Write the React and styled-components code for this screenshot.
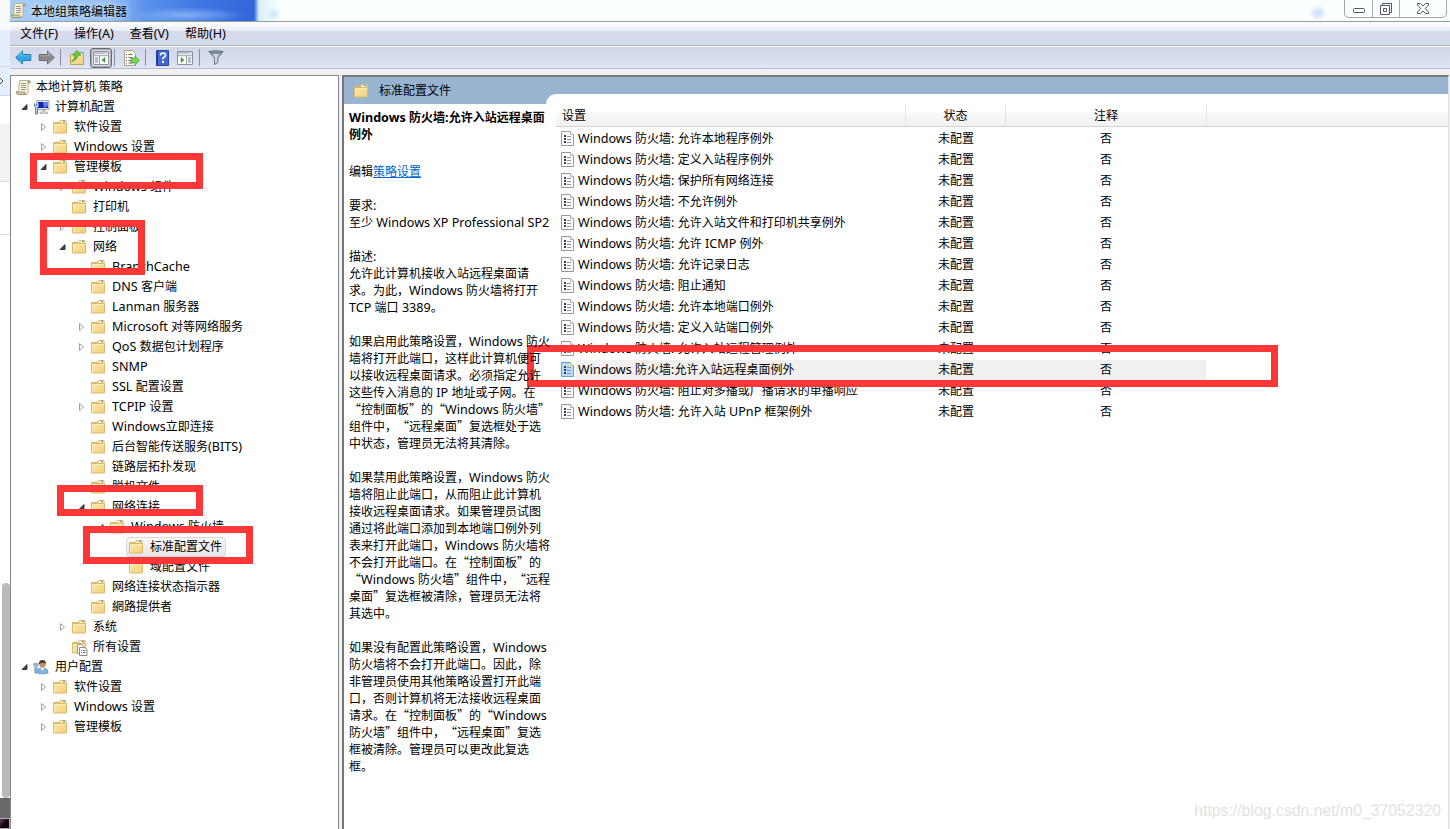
import React from "react";
import styled, { createGlobalStyle } from "styled-components";

const GlobalStyle = createGlobalStyle`
  * {
    box-sizing: border-box;
  }
  body {
    margin: 0;
    overflow: hidden;
    background: #fff;
  }
`;

const tree = [
  { depth: 0, icon: "scroll", label: "本地计算机 策略" },
  { depth: 1, icon: "computer", label: "计算机配置", state: "open" },
  { depth: 2, label: "软件设置", state: "closed" },
  { depth: 2, label: "Windows 设置", state: "closed" },
  { depth: 2, label: "管理模板", state: "open" },
  { depth: 3, label: "Windows 组件", state: "closed" },
  { depth: 3, label: "打印机" },
  { depth: 3, label: "控制面板", state: "closed" },
  { depth: 3, label: "网络", state: "open" },
  { depth: 4, label: "BranchCache" },
  { depth: 4, label: "DNS 客户端" },
  { depth: 4, label: "Lanman 服务器" },
  { depth: 4, label: "Microsoft 对等网络服务", state: "closed" },
  { depth: 4, label: "QoS 数据包计划程序", state: "closed" },
  { depth: 4, label: "SNMP" },
  { depth: 4, label: "SSL 配置设置" },
  { depth: 4, label: "TCPIP 设置", state: "closed" },
  { depth: 4, label: "Windows立即连接" },
  { depth: 4, label: "后台智能传送服务(BITS)" },
  { depth: 4, label: "链路层拓扑发现" },
  { depth: 4, label: "脱机文件" },
  { depth: 4, label: "网络连接", state: "open" },
  { depth: 5, label: "Windows 防火墙", state: "open" },
  { depth: 6, label: "标准配置文件", selected: true },
  { depth: 6, label: "域配置文件" },
  { depth: 4, label: "网络连接状态指示器" },
  { depth: 4, label: "網路提供者" },
  { depth: 3, label: "系统", state: "closed" },
  { depth: 3, icon: "all", label: "所有设置" },
  { depth: 1, icon: "user", label: "用户配置", state: "open" },
  { depth: 2, label: "软件设置", state: "closed" },
  { depth: 2, label: "Windows 设置", state: "closed" },
  { depth: 2, label: "管理模板", state: "closed" },
];

const settings = [
  "Windows 防火墙: 允许本地程序例外",
  "Windows 防火墙: 定义入站程序例外",
  "Windows 防火墙: 保护所有网络连接",
  "Windows 防火墙: 不允许例外",
  "Windows 防火墙: 允许入站文件和打印机共享例外",
  "Windows 防火墙: 允许 ICMP 例外",
  "Windows 防火墙: 允许记录日志",
  "Windows 防火墙: 阻止通知",
  "Windows 防火墙: 允许本地端口例外",
  "Windows 防火墙: 定义入站端口例外",
  "Windows 防火墙: 允许入站远程管理例外",
  "Windows 防火墙:允许入站远程桌面例外",
  "Windows 防火墙: 阻止对多播或广播请求的单播响应",
  "Windows 防火墙: 允许入站 UPnP 框架例外",
];

const description = [
  ["要求:", "至少 Windows XP Professional SP2"],
  [
    "描述:",
    "允许此计算机接收入站远程桌面请",
    "求。为此，Windows 防火墙将打开",
    "TCP 端口 3389。",
  ],
  [
    "如果启用此策略设置，Windows 防火",
    "墙将打开此端口，这样此计算机便可",
    "以接收远程桌面请求。必须指定允许",
    "这些传入消息的 IP 地址或子网。在",
    "“控制面板”的“Windows 防火墙”",
    "组件中，“远程桌面”复选框处于选",
    "中状态，管理员无法将其清除。",
  ],
  [
    "如果禁用此策略设置，Windows 防火",
    "墙将阻止此端口，从而阻止此计算机",
    "接收远程桌面请求。如果管理员试图",
    "通过将此端口添加到本地端口例外列",
    "表来打开此端口，Windows 防火墙将",
    "不会打开此端口。在“控制面板”的",
    "“Windows 防火墙”组件中，“远程",
    "桌面”复选框被清除，管理员无法将",
    "其选中。",
  ],
  [
    "如果没有配置此策略设置，Windows",
    "防火墙将不会打开此端口。因此，除",
    "非管理员使用其他策略设置打开此端",
    "口，否则计算机将无法接收远程桌面",
    "请求。在“控制面板”的“Windows",
    "防火墙”组件中，“远程桌面”复选",
    "框被清除。管理员可以更改此复选",
    "框。",
  ],
];

const marks = [
  { x: 30, y: 153, w: 173, h: 36 },
  { x: 40, y: 220, w: 105, h: 55 },
  { x: 57, y: 485, w: 146, h: 31 },
  { x: 83, y: 526, w: 170, h: 38 },
  { x: 527, y: 345, w: 751, h: 42 },
];

// latin runs get their own face so the CJK punctuation stays full width
const Text = ({ children }) =>
  children
    .split(/( ?[\x21-\x7e]+(?: [\x21-\x7e]+)* ?)/)
    .map((part, i) => (i % 2 ? <Latin key={i}>{part}</Latin> : part));

const FolderShape = () => (
  <>
    <path d="M1.500 3.500h6l1-2h5.500v4H1.500z" fill="#f7e6ae" stroke="#d6b76f" />
    <path d="M9 2.500h4.500" stroke="#fffdf0" />
    <path d="M11 2.500h2" stroke="#4a9be0" />
    <path d="M1.500 4.500h13v9.500h-13z" fill="url(#folder)" stroke="#d9b96c" />
    <path d="M2.500 13.500V5.500h11.500" fill="none" stroke="#fdedb8" />
  </>
);

const Folder = () => (
  <svg width="16" height="16" viewBox="0 0 16 16">
    <FolderShape />
  </svg>
);

const Scroll = () => (
  <svg width="17" height="17" viewBox="0 0 17 17">
    <path
      d="M4.500 1.500h10q1.500 1 0 2.500H13v8.500q0 3-2 3H2.500Q.5 14.500 1.500 12.500h2z"
      fill="#f9f4df"
      stroke="#b8af8c"
    />
    <path d="M1.500 13h8q0 2.500 2 2.500h-9q-1.500-1-1-2.500z" fill="#d9ce9d" stroke="#a1966f" />
    <path d="M13 4V2.500q1-1 2 0V4z" fill="#c9bd88" stroke="#a1966f" />
    <path d="M6 4.500h5M6 6.500h5M6 8.500h5M6 10.500h5" stroke="#9c9784" />
  </svg>
);

const Computer = () => (
  <svg width="17" height="16" viewBox="0 0 17 16">
    <path d="M3.500 1.500h12.500v9H3.500z" fill="#e2e4e7" stroke="#a4a9af" />
    <path d="M5 3h10v6H5z" fill="#1422b8" />
    <path d="M10 3h5v4L11 9z" fill="#5d83f0" />
    <path d="M9 11h3v2h2.500v1.500H7V13h2z" fill="#d0d1d2" stroke="#989b9e" strokeWidth=".5" />
    <path d="M1.500 4.500v3l1 1v6.500h2V8.500l1-1v-3M3.500 5v2" fill="#b9d5ec" stroke="#5f83a6" />
  </svg>
);

const User = () => (
  <svg width="16" height="16" viewBox="0 0 16 16">
    <path d="M5 14.500V11q0-2 3-2h3.500q3.500 1 3.500 4v1q-5 1.500-10 .5z" fill="#82b7e6" stroke="#5289bd" strokeWidth=".7" />
    <path d="M7.500 9l2 2.500L11.500 9z" fill="#fff" />
    <circle cx="9.500" cy="5.500" r="3" fill="#c08e62" />
    <path d="M6 5.500Q5.500 1 9.500 1T13 6L12 3.800 8 4z" fill="#4d3a2a" />
    <path d="M1 4v2.500L2 7.500v6.500h2V7.500l1-1V4M3 4v2.500" fill="#bed7eb" stroke="#5c7f9d" strokeWidth=".9" />
  </svg>
);

const AllSettings = () => (
  <svg width="17" height="17" viewBox="0 0 17 17">
    <FolderShape />
    <path d="M6.500 5.500h4l2 2v7h-6z" fill="#fff" stroke="#9a9a9a" />
    <path d="M8.500 8.500h5l2.500 2v6h-7.500z" fill="#fff" stroke="#8b8b8b" />
    <path d="M10 11.500h1M12 11.500h2.500M10 13.500h1M12 13.500h2.500" stroke="#70788c" />
  </svg>
);

const treeIcons = {
  folder: <Folder />,
  scroll: <Scroll />,
  computer: <Computer />,
  user: <User />,
  all: <AllSettings />,
};

const Arrow = ({ state }) => (
  <svg width="9" height="10" viewBox="0 0 9 10">
    {state === "open" && <path d="M7 2.500v5H2z" fill="#404040" stroke="#222" strokeWidth=".8" />}
    {state === "closed" && <path d="M2.500 1.500v7l4-3.500z" fill="#fff" stroke="#a0a0a0" />}
  </svg>
);

const SettingIcon = ({ active }) => (
  <svg width="14" height="16" viewBox="0 0 14 16">
    <path
      d="M.5.5h9l3 3v11H.5z"
      fill={active ? "#b9dcfa" : "#fcfcfc"}
      stroke={active ? "#6f9fcb" : "#999"}
    />
    <path d="M9.500.5v3h3" fill="#fff" stroke={active ? "#dedb67" : "#b5b5b5"} />
    <path d="M3 5h2M3 8h2M3 11h2" stroke="#333e50" strokeWidth="2" />
    <path d="M6 5.500h4M6 8.500h4M6 11.500h4" stroke="#8b8fa9" />
  </svg>
);

const Arrows = ({ back }) => (
  <svg width="17" height="15" viewBox="0 0 17 15">
    {back ? (
      <path d="M.7 7.500L7.500 1v3.500h8.300v6H7.500V14z" fill="url(#blue)" stroke="#277aaf" />
    ) : (
      <path d="M16.300 7.500L9.500 1v3.500H1.200v6h8.300V14z" fill="url(#grey)" stroke="#6b6b6b" />
    )}
  </svg>
);

const UpFolder = () => (
  <svg width="16" height="16" viewBox="0 0 16 16">
    <path d="M1.500 4.500h7l1.500-2h4.500v12h-13z" fill="url(#folder)" stroke="#c3a152" />
    <path d="M11 2.500h3" stroke="#4a9be0" />
    <path d="M2.500 11.500Q6 9 6 5H3.500l4.500-4.500L12 5H9Q8.500 10 2.500 11.500z" fill="#69cf35" stroke="#3f9a2a" strokeWidth=".8" />
  </svg>
);

const Console = ({ flip }) => (
  <svg width="16" height="14" viewBox="0 0 16 14">
    <path d="M.5.5h15v13H.5z" fill="#fff" stroke="#8b9198" />
    <path d="M1 2h14M1 4.500h14" stroke="#aeb3b9" strokeWidth="1.500" />
    <path d="M12 2h1M14 2h1" stroke="#fff" />
    <path d={flip ? "M9.500 5v8" : "M6.500 5v8"} stroke="#9aa0a8" />
    <path
      d={flip ? "M11 7h3M11 9h3M11 11h3" : "M2 7h3M2 9h3M2 11h3"}
      stroke="#5f82a0"
    />
    <path d={flip ? "M4 6.500v5L7 9z" : "M12 6.500v5L9 9z"} fill="#3aa52e" stroke="#34942b" strokeWidth=".5" />
  </svg>
);

const ExportList = () => (
  <svg width="17" height="16" viewBox="0 0 17 16">
    <path d="M1.500.5h8l3 3v12h-11z" fill="#fdfae6" stroke="#aaa487" />
    <path d="M3 4.500h1M5.500 4.500h4M3 7.500h1M5.500 7.500h4M3 10.500h1M5.500 10.500h3M3 13h1M5.500 13h5" stroke="#666c79" />
    <path d="M8 8.500h4V6l4.500 4.500L12 15v-2.500H8z" fill="#77d950" stroke="#43a42e" strokeWidth=".8" />
  </svg>
);

const Help = () => (
  <svg width="13" height="16" viewBox="0 0 13 16">
    <path d="M.5.5h12v15H.5z" fill="#4468d4" stroke="#294599" />
    <path d="M1.500 1v14" stroke="#223879" />
    <path d="M4.500 5.500q0-2.500 2.500-2.500t2.500 2.300q0 1.300-1.500 2T7 9.500" fill="none" stroke="#fff" strokeWidth="1.700" />
    <path d="M7 11v2" stroke="#fff" strokeWidth="2" />
  </svg>
);

const Filter = () => (
  <svg width="16" height="15" viewBox="0 0 16 15">
    <path d="M.8 1.500h14.400L9.800 8v4.500l-3.300 2V8z" fill="url(#funnel)" stroke="#657887" />
    <ellipse cx="8" cy="2" rx="6.800" ry="1.400" fill="#748b9a" stroke="#5d6f7c" strokeWidth=".6" />
  </svg>
);

const Defs = () => (
  <HiddenSvg>
    <linearGradient id="folder" x2="1" y2="1">
      <stop stopColor="#fce8ab" />
      <stop offset="1" stopColor="#f2d07b" />
    </linearGradient>
    <linearGradient id="blue" x2="0" y2="1">
      <stop stopColor="#8bdcf8" />
      <stop offset=".55" stopColor="#24a1df" />
      <stop offset="1" stopColor="#57c9f2" />
    </linearGradient>
    <linearGradient id="grey" x2="0" y2="1">
      <stop stopColor="#c4c4c4" />
      <stop offset=".55" stopColor="#818181" />
      <stop offset="1" stopColor="#b4b4b4" />
    </linearGradient>
    <linearGradient id="funnel">
      <stop stopColor="#6e8594" />
      <stop offset=".5" stopColor="#d5e2e9" />
      <stop offset="1" stopColor="#607887" />
    </linearGradient>
  </HiddenSvg>
);

const App = () => {
  return (
    <Desktop>
      <GlobalStyle />
      <Defs />
      <Behind>
        <BehindBlock $h={30} $bg="#fafafc" />
        <BehindBlock $h={37} $bg="#e5eefc" $line="#cbd7ea" />
        <BehindBlock $h={29} $bg="#e5eefc" $line="#cbd7ea">
          <svg width="4" height="8" viewBox="0 0 4 8">
            <path d="M0 1l3 3-3 3" fill="none" stroke="#444" />
          </svg>
        </BehindBlock>
        <BehindBlock $h={28} $bg="#fff" />
        <BehindBlock $h={58} $bg="#f2f2f2" $line="#ddd" />
        <BehindBlock $h={53} $bg="#fff" $line="#ddd" />
        <BehindBlock $h={348} $bg="#fff" />
        <ScrollThumb />
        <BehindBlock $h={20} $bg="#686868" />
        <DarkCorner />
      </Behind>
      <Window>
        <TitleBar>
          <Scroll />
          <Title>本地组策略编辑器</Title>
          <WindowButtons>
            <WindowButton $w={27} $drop={3}>
              <svg width="12" height="5" viewBox="0 0 12 5">
                <rect x=".5" y=".5" width="11" height="4" rx="1" fill="#fff" stroke="#535666" />
              </svg>
            </WindowButton>
            <WindowButton $w={27}>
              <svg width="12" height="12" viewBox="0 0 12 12">
                <path d="M2.500 2.500v-2h9v9h-2" fill="#fff" stroke="#535666" />
                <path d="M.5 2.500h9v9h-9zM3.500 5.500h3v3h-3z" fill="#fff" stroke="#535666" />
              </svg>
            </WindowButton>
            <WindowButton $w={47}>
              <svg width="12" height="11" viewBox="0 0 12 11">
                <path
                  d="M.5.5h3L6 3 8.500.5h3v1.500L8.300 5.500l3.200 3.500v1.500h-3L6 8l-2.500 2.500h-3V9l3.200-3.500L.5 2z"
                  fill="#fff"
                  stroke="#535666"
                />
              </svg>
            </WindowButton>
          </WindowButtons>
        </TitleBar>
        <MenuBar>
          {["文件(F)", "操作(A)", "查看(V)", "帮助(H)"].map((item) => (
            <span key={item}>
              <Text>{item}</Text>
            </span>
          ))}
        </MenuBar>
        <ToolBar>
          <Tool $w={24}><Arrows back /></Tool>
          <Tool $w={22}><Arrows /></Tool>
          <Separator $gap={3} />
          <Tool $w={26}><UpFolder /></Tool>
          <Tool $w={22} $pressed><Console /></Tool>
          <Separator $gap={2} />
          <Tool $w={26}><ExportList /></Tool>
          <Separator $gap={1} />
          <Tool $w={26}><Help /></Tool>
          <Tool $w={20}><Console flip /></Tool>
          <Separator $gap={4} />
          <Tool $w={26}><Filter /></Tool>
        </ToolBar>
        <Panes>
          <TreePane>
            {tree.map((node, i) => (
              <TreeRow key={i} $depth={node.depth}>
                {node.depth > 0 && <ArrowSlot><Arrow state={node.state} /></ArrowSlot>}
                <TreeItem $selected={node.selected}>
                  <IconSlot $root={node.depth === 0}>{treeIcons[node.icon || "folder"]}</IconSlot>
                  <Label><Text>{node.label}</Text></Label>
                </TreeItem>
              </TreeRow>
            ))}
          </TreePane>
          <ResultPane>
            <Banner>
              <Folder />
              <Label>标准配置文件</Label>
            </Banner>
            <Content>
              <Details>
                <Heading>
                  <Text>Windows 防火墙:允许入站远程桌面</Text>
                  <br />
                  例外
                </Heading>
                <Edit>
                  编辑<Link>策略设置</Link>
                </Edit>
                {description.map((lines, i) => (
                  <Paragraph key={i}>
                    {lines.map((line, j) => (
                      <Line key={j}><Text>{line}</Text></Line>
                    ))}
                  </Paragraph>
                ))}
              </Details>
              <Sheet>
                <HeaderRow>
                  <HeaderCell $first>设置</HeaderCell>
                  <HeaderCell>状态</HeaderCell>
                  <HeaderCell>注释</HeaderCell>
                  <HeaderCell />
                </HeaderRow>
                {settings.map((name, i) => (
                  <SettingRow key={name}>
                    <SettingIcon active={i === 11} />
                    <SettingCells $active={i === 11}>
                      <SettingName><Text>{name}</Text></SettingName>
                      <Label>未配置</Label>
                      <Label>否</Label>
                    </SettingCells>
                  </SettingRow>
                ))}
              </Sheet>
            </Content>
          </ResultPane>
        </Panes>
      </Window>
      {marks.map((m) => (
        <Mark key={m.y} $x={m.x} $y={m.y} $w={m.w} $h={m.h} />
      ))}
      <Watermark>https://blog.csdn.net/m0_37052320</Watermark>
    </Desktop>
  );
};

const Desktop = styled.div`
  position: relative;
  display: flex;
  width: 1450px;
  height: 829px;
  overflow: hidden;
  background: #fff;
  color: #000;
  font: 12px/17px "Noto Sans CJK SC", sans-serif;
  text-spacing-trim: space-all;
  white-space: nowrap;
  svg {
    display: block;
    flex: none;
  }
`;

const HiddenSvg = styled.svg`
  position: absolute;
  width: 0;
  height: 0;
`;

const Latin = styled.span`
  font-family: "Noto Sans", sans-serif;
  font-size: 12.6px;
  line-height: 1;
  white-space: pre;
`;

const Label = styled.span`
  padding-bottom: 3px;
`;

const Behind = styled.div`
  flex: none;
  width: 10px;
`;

const BehindBlock = styled.div`
  display: flex;
  align-items: center;
  height: ${(p) => p.$h}px;
  background: ${(p) => p.$bg};
  border-bottom: ${(p) => (p.$line ? `1px solid ${p.$line}` : "none")};
`;

const ScrollThumb = styled.div`
  height: 215px;
  margin-left: 2px;
  border-radius: 4px;
  background: #bababa;
`;

const DarkCorner = styled.div`
  height: 11px;
  border: 1px solid #b9a9b5;
  border-left: 0;
  background: linear-gradient(135deg, #60465a, #150510 50%);
`;

const Window = styled.div`
  flex: 1;
  display: flex;
  flex-direction: column;
  min-width: 0;
  background: #f0f0f0;
`;

const TitleBar = styled.div`
  display: flex;
  align-items: center;
  height: 22px;
  padding: 0 3px 1px 0;
  border-bottom: 1px solid #959c9f;
  background:
    radial-gradient(ellipse 9px 8px at 1308px 13px, #c3dcff, transparent),
    radial-gradient(ellipse 7px 7px at 264px 14px, #c6e7fb, transparent),
    radial-gradient(ellipse 60px 8px at 175px 15px, #7fb0f4, transparent),
    linear-gradient(90deg, #a6cdf5 0, #93bff5 100px, #5c92ec 135px, #3f76e3 190px, #3464da 244px, #d9effc 249px, #fafffe 270px, #fafefe);
`;

const Title = styled.span`
  margin-left: 4px;
  text-shadow: 0 0 6px #fff;
`;

const WindowButtons = styled.div`
  display: flex;
  align-self: flex-start;
  height: 18px;
  margin-left: auto;
  border: 1px solid #a1a5a8;
  border-top: 0;
  border-radius: 0 0 5px 5px;
`;

const WindowButton = styled.div`
  display: flex;
  align-items: center;
  justify-content: center;
  width: ${(p) => p.$w}px;
  padding-top: ${(p) => p.$drop || 0}px;
  border-left: 1px solid #a9adb0;
  &:first-child {
    border-left: 0;
  }
`;

const MenuBar = styled.div`
  display: flex;
  align-items: center;
  gap: 16px;
  height: 24px;
  padding: 0 9px 2px 10px;
  border-bottom: 1px solid #b0b2bb;
  background: linear-gradient(#fff, #e7ecf5 9px, #d5d9ec 9px, #d7dbee);
`;

const ToolBar = styled.div`
  display: flex;
  align-items: center;
  height: 23px;
  padding-left: 1px;
  border-top: 1px solid #fff;
  border-bottom: 1px solid #b2bbd1;
  background: linear-gradient(#d2d7ea, #d9dff0 70%, #e1e7f7);
`;

const Tool = styled.div`
  display: flex;
  align-items: center;
  justify-content: center;
  flex: none;
  width: ${(p) => p.$w}px;
  height: 20px;
  border-radius: 3px;
  border: ${(p) => (p.$pressed ? "1px solid #686e78" : "0")};
  background: ${(p) => (p.$pressed ? "#dadde3" : "none")};
  box-shadow: ${(p) => (p.$pressed ? "inset 0 0 0 1px #a6abb5" : "none")};
`;

const Separator = styled.div`
  flex: none;
  width: 1px;
  height: 17px;
  margin-left: ${(p) => p.$gap}px;
  margin-right: 3px;
  background: #8b8f9a;
`;

const Panes = styled.div`
  flex: 1;
  display: flex;
  gap: 3px;
  padding-top: 6px;
`;

const TreePane = styled.div`
  flex: none;
  width: 329px;
  padding-top: 1px;
  border: 1px solid #828790;
  border-bottom: 0;
  background: #fff;
`;

const TreeRow = styled.div`
  display: flex;
  align-items: center;
  height: 20px;
  padding-left: ${(p) => (p.$depth ? p.$depth * 19 - 10 : 2)}px;
`;

const ArrowSlot = styled.div`
  width: 11px;
`;

const TreeItem = styled.div`
  display: flex;
  align-items: center;
  height: 20px;
  padding: 0 3px 0 1px;
  border: 1px solid ${(p) => (p.$selected ? "#d9d9d9" : "transparent")};
  border-radius: 3px;
  background: ${(p) => (p.$selected ? "linear-gradient(#fafafa, #e6e6e6)" : "none")};
`;

const IconSlot = styled.div`
  width: ${(p) => (p.$root ? 21 : 22)}px;
`;

const ResultPane = styled.div`
  flex: 1;
  display: flex;
  flex-direction: column;
  margin-right: 1px;
  border: 2px solid #696969;
  border-width: 2px 1px 0 2px;
  border-color: #777 #e3e3e3 #777 #777;
  background: #fff;
`;

const Banner = styled.div`
  display: flex;
  align-items: center;
  gap: 10px;
  height: 27px;
  padding: 0 0 0 9px;
  background: #99b4d1;
`;

const Content = styled.div`
  display: flex;
`;

// long lines run a few pixels into the sheet, so the text stays on top
const Details = styled.div`
  position: relative;
  z-index: 1;
  flex: none;
  width: 202px;
  padding: 4px 0 0 5px;
`;

const Heading = styled.div`
  margin-bottom: 20px;
  font-weight: 700;
`;

const Edit = styled.div`
  margin-bottom: 17px;
`;

const Link = styled.span`
  color: #0066cc;
  text-decoration: underline;
`;

const Paragraph = styled.div`
  margin-bottom: 17px;
`;

const Line = styled.div`
  height: 17px;
`;

const Sheet = styled.div`
  flex: 1;
  margin-top: -10px;
  padding: 10px 0 0 10px;
  border-top-left-radius: 10px;
  background: #fff;
`;

const HeaderRow = styled.div`
  display: grid;
  grid-template-columns: 350px 100px 201px 1fr;
  height: 23px;
  margin-bottom: 1px;
  border-bottom: 1px solid #d5d5d5;
  background: linear-gradient(#fff 9px, #f7f8fa 9px, #f1f2f4);
`;

const HeaderCell = styled.div`
  padding: 2px 0 0 ${(p) => (p.$first ? 6 : 0)}px;
  border-right: 1px solid #e2e3e5;
  text-align: ${(p) => (p.$first ? "left" : "center")};
  &:last-child {
    border-right: 0;
  }
`;

const SettingRow = styled.div`
  display: flex;
  align-items: center;
  gap: 1px;
  height: 21px;
  padding-left: 5px;
`;

const SettingCells = styled.div`
  display: grid;
  grid-template-columns: 330px 100px 200px;
  align-items: center;
  height: 20px;
  background: ${(p) => (p.$active ? "#f0f0f0" : "none")};
  text-align: center;
`;

const SettingName = styled(Label)`
  padding-left: 2px;
  text-align: left;
`;

const Mark = styled.div`
  position: absolute;
  left: ${(p) => p.$x}px;
  top: ${(p) => p.$y}px;
  width: ${(p) => p.$w}px;
  height: ${(p) => p.$h}px;
  border: 7px solid #fc3737;
`;

const Watermark = styled.div`
  position: absolute;
  right: 9px;
  bottom: 9px;
  color: #e2e2e2;
  font: 15.8px/18px "Liberation Sans", sans-serif;
`;

export default App;
